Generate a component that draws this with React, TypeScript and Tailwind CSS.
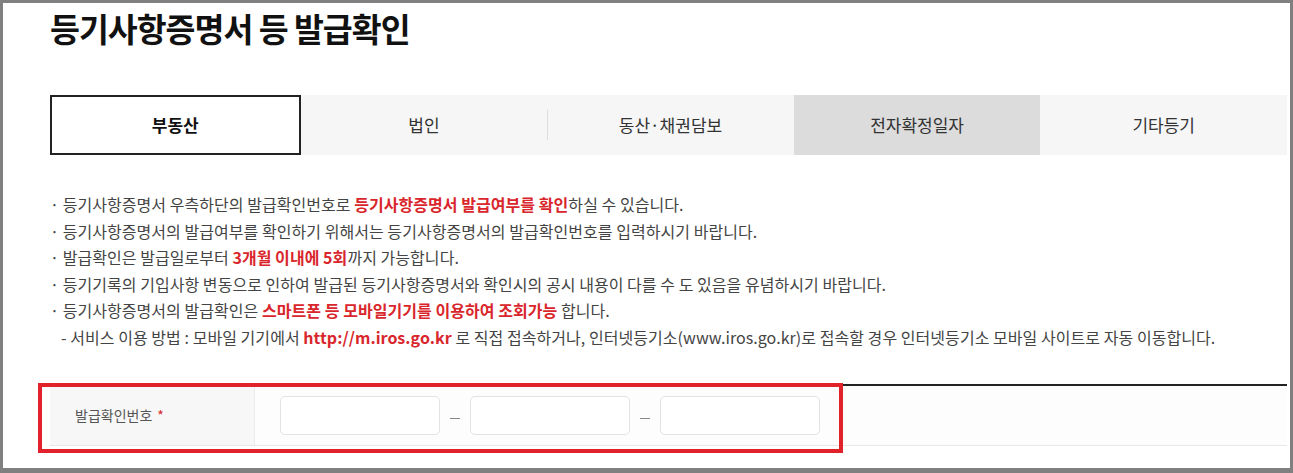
import React from "react";

const tabs = ["부동산", "법인", "동산·채권담보", "전자확정일자", "기타등기"];

const App = () => {
  return (
    <div
      className="w-[1293px] h-[473px] bg-[#808080] pt-[3px] pl-[3px] pr-[3px] pb-[5px]"
      style={{ fontFamily: '"Noto Sans CJK KR", "Noto Sans", sans-serif' }}
    >
      <div className="relative h-full bg-white pl-[47px] pr-[3px] overflow-hidden">
        <h1 className="pt-[3px] h-[92px] text-[32.5px] leading-[44px] font-bold tracking-[-1px] text-[#111]">
          등기사항증명서 등 발급확인
        </h1>

        {/* tabs */}
        <div className="flex h-[60px]">
          {tabs.map((t, i) => (
            <div
              key={t}
              className={
                i === 0
                  ? "flex-1 flex items-center justify-center bg-white border-2 border-[#222] text-[17px] font-bold text-[#111]"
                  : i === 3
                  ? "flex-1 flex items-center justify-center bg-[#dcdcdc] text-[17px] text-[#333]"
                  : "relative flex-1 flex items-center justify-center bg-[#f6f6f6] text-[17px] text-[#333]"
              }
            >
              {i === 2 && (
                <span className="absolute left-0 top-[15px] h-[30px] w-px bg-[#dddddd]" />
              )}
              {t}
            </div>
          ))}
        </div>

        {/* notice */}
        <ul className="mt-[36px] text-[16px] leading-[26.5px] text-[#444] tracking-[0.05px]">
          <li>
            · 등기사항증명서 우측하단의 발급확인번호로{" "}
            <b className="text-[#d9262c]">등기사항증명서 발급여부를 확인</b>하실 수 있습니다.
          </li>
          <li>· 등기사항증명서의 발급여부를 확인하기 위해서는 등기사항증명서의 발급확인번호를 입력하시기 바랍니다.</li>
          <li>
            · 발급확인은 발급일로부터 <b className="text-[#d9262c]">3개월 이내에 5회</b>까지 가능합니다.
          </li>
          <li>· 등기기록의 기입사항 변동으로 인하여 발급된 등기사항증명서와 확인시의 공시 내용이 다를 수 도 있음을 유념하시기 바랍니다.</li>
          <li>
            · 등기사항증명서의 발급확인은{" "}
            <b className="text-[#d9262c]">스마트폰 등 모바일기기를 이용하여 조회가능</b> 합니다.
          </li>
          <li className="pl-[11px]">
            - 서비스 이용 방법 : 모바일 기기에서 <b className="text-[#d9262c]">http://m.iros.go.kr</b> 로 직접
            접속하거나, 인터넷등기소(www.iros.go.kr)로 접속할 경우 인터넷등기소 모바일 사이트로 자동 이동합니다.
          </li>
        </ul>

        {/* form */}
        <div className="mt-[34px] border-t-2 border-[#222] border-b border-b-[#e8e8e8] flex h-[62px]">
          <div className="w-[205px] bg-[#f7f7f7] border-r border-[#ebebeb] flex items-center pl-[25px] text-[14px] text-[#555]">
            발급확인번호 <span className="ml-[5px] text-[#d9262c]">*</span>
          </div>
          <div className="flex items-center pl-[25px] bg-[#fdfdfd] flex-1">
            <div className="w-[160px] h-[39px] rounded-[5px] border border-[#e3e3e3] bg-white" />
            <span className="w-[30px] flex justify-center pt-[6px]">
              <span className="block w-[10px] h-px bg-[#888]" />
            </span>
            <div className="w-[160px] h-[39px] rounded-[5px] border border-[#e3e3e3] bg-white" />
            <span className="w-[30px] flex justify-center pt-[6px]">
              <span className="block w-[10px] h-px bg-[#888]" />
            </span>
            <div className="w-[160px] h-[39px] rounded-[5px] border border-[#e3e3e3] bg-white" />
          </div>
        </div>

        {/* annotation box */}
        <div className="absolute left-[35px] top-[380px] w-[805px] h-[70px] border-[4.5px] border-[#e2222a]" />
      </div>
    </div>
  );
};

export default App;
